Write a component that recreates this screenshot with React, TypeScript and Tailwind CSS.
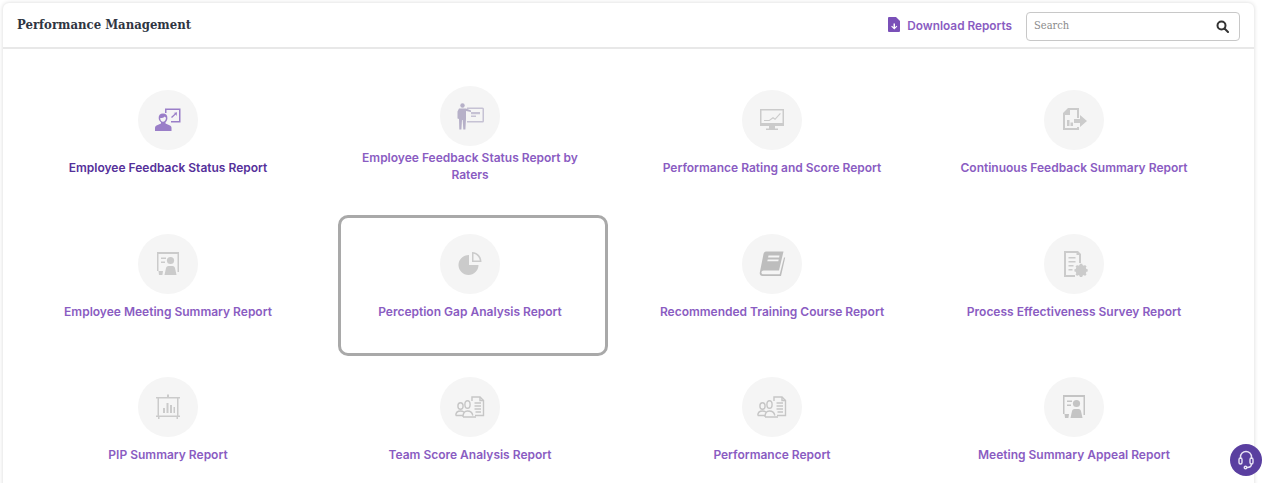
import React from "react";

const Ic = ({ children, c = "#cbcbcb" }: { children: React.ReactNode; c?: string }) => (
  <svg width="30" height="30" viewBox="0 0 30 30" fill={c} stroke="none" style={{ color: c }}>
    {children}
  </svg>
);

const Presenter = () => (
  <Ic c="#9a7ec8">
    <path d="M12 3.500h15.500v14H18v-1.600h8V5H13.500v3H12z" />
    <path d="M18 12l4-3.500-1.500-.6 3.500-.6-.4 3.600-.9-1.400-3.700 3.400z" />
    <path d="M10 8.500c3 0 4.600 2 4.400 4.800-.1 1.600-.8 3-1.900 3.900v1.200l4.500 2.200c1 .5 1.500 1.300 1.500 2.400v3H2v-3c0-1.100.5-1.900 1.500-2.400L8 18.400v-1.200c-1.300-.9-2.200-2.300-2.300-3.900C5.500 10.500 7 8.500 10 8.500z" />
    <path d="M7.200 13c1.500.1 3.600-.3 4.600-1.500.4.700.9 1.100 1.200 1.300 0 2.200-1.300 4-3 4s-2.800-1.800-2.800-3.800z" fill="#f5f5f5" />
  </Ic>
);
const Pointer = () => (
  <Ic c="#b6b0c8">
    <circle cx="7.500" cy="4.500" r="2.200" />
    <path d="M4 7.500h7l5 2v1.500l-5-1v8l-.6 10.500H8.300L7.700 19H7l-.6 9.500H4.300L4 18l-1.500-.5v-7z" />
    <path fillRule="evenodd" d="M12 6.500h15.500q1.500 0 1.500 1.500v12q0 1.500-1.500 1.500H12V20h15.500V8H12z" opacity=".75" />
    <path d="M16 11h9v2.200h-9zM16 14.500h5v1.500h-5z" opacity=".75" />
  </Ic>
);
const Monitor = () => (
  <Ic>
    <path fillRule="evenodd" d="M3 4h24v17H3zM4.500 5.500v12.500h21V5.500z" />
    <path d="M12 21h6v2.500h3V25H9v-1.500h3z" />
    <path d="M7 15h5l4-3 2 1.500 5-5.500.8.700-5.700 6.300-2.100-1.600-3.600 2.600H7z" />
  </Ic>
);
const DocArrow = () => (
  <Ic>
    <path d="M9 3h11v10h-2V5h-7v5H6v13h12v-1h2v3H4V8z" />
    <path d="M8 15h2.500v6H8zM11.500 17.500H14V21h-2.500z" />
    <path d="M15 14h6v-4l7 6-7 6v-4h-6z" />
  </Ic>
);
const Meeting = ({ c }: { c?: string }) => (
  <Ic c={c}>
    <path fillRule="evenodd" d="M4 3h22v20h-1.500V5h-19v17H4z" />
    <path d="M8 8.500h5V10H8zM8 12.500h4V14H8z" />
    <circle cx="17.500" cy="11.500" r="3.600" />
    <path d="M11.500 26l1.500-7c.3-1.200 1.300-2 2.500-2h4c1.200 0 2.200.8 2.500 2l1.500 7z" />
    <path d="M5.500 22H10l-.6 4H6z" />
  </Ic>
);
const Pie = () => (
  <Ic>
    <path d="M14 6v10h9.500c0 5.500-4.500 10-10 10s-10-4.500-10-10S8 6 14 6z" />
    <path fillRule="evenodd" d="M17 3c5 0 9.500 4 9.500 10H17zM18.500 4.700v6.800h6.300c-.6-3.500-3-6.100-6.300-6.800z" />
  </Ic>
);
const Book = () => (
  <Ic c="#bdbdbd">
    <path d="M9 2.500h17.500L22 21.500H6.500c-1.400 0-2.100 1-2.100 2s.8 1.800 2 1.800h16.300L27 8.500h1.200L24 27H5.500C3.500 27 2.400 25.500 2.800 23.500L6.500 5C6.800 3.500 7.800 2.500 9 2.500z" />
    <path d="M11.500 6.500h11l-.4 2H11.100zM10.700 10.500h11l-.4 1.800h-11z" fill="#f5f5f5" />
  </Ic>
);
const DocGear = () => (
  <Ic>
    <path fillRule="evenodd" d="M5 2h14l3 3v9h-2V6h-2.500V4H7v22h9v2H5z" />
    <path d="M9.500 8h7v1.500h-7zM9.500 12h7v1.500h-7zM9.500 16h5v1.500h-5zM9.500 20h4v1.500h-4z" />
    <path
      fillRule="evenodd"
      d="M21 14h3l.4 1.800 1.700.7 1.500-1 2 2-1 1.500.7 1.700 1.700.3v3l-1.700.4-.7 1.700 1 1.500-2 2-1.500-1-1.700.7-.4 1.700h-3l-.4-1.700-1.700-.7-1.500 1-2-2 1-1.500-.7-1.700-1.700-.4v-3l1.700-.3.7-1.700-1-1.500 2-2 1.500 1 1.700-.7z"
      transform="translate(4.500 3.800) scale(.78)"
    />
  </Ic>
);
const Board = () => (
  <Ic>
    <path fillRule="evenodd" d="M14 2.500h2V5h11v1.500h-1.500v17H27V25h-2v2h-1.500v-2h-17v2H5v-2H3v-1.500h1.500v-17H3V5h11zM6 6.500v17h18v-17z" />
    <path d="M10 16h2v5h-2zM13.500 11h2v10h-2zM17 13h2v8h-2zM20.500 15h1.500v6h-1.500z" />
  </Ic>
);
const Team = () => (
  <Ic>
    <g fill="none" stroke="#c6c6c6" strokeWidth="1.400">
      <path d="M17 9V5h8l3.500 3.500v15H20" />
      <path d="M25 5v3.500h3.500M19.500 11h6.500M19.500 14h6.500M19.500 17h6.500M20.500 20h5.500" />
      <ellipse cx="5.500" cy="14" rx="2.600" ry="3.300" />
      <ellipse cx="12.500" cy="12.500" rx="2.600" ry="3.800" />
      <path d="M.8 23.500c0-3 1.800-4.500 4.700-4.500 1.500 0 2.500.4 3.500 1M8 25c0-3.500 1.700-6 4.500-6s4.800 1.800 5.300 4.500" />
      <path d="M.8 23.500H8M8 25h13" />
    </g>
  </Ic>
);

const Item = ({
  label,
  icon,
  tight,
  dark,
  active,
}: {
  label: string;
  icon: React.ReactNode;
  tight?: boolean;
  dark?: boolean;
  active?: boolean;
}) => (
  <div
    className={`h-[141px] pr-[6px] flex flex-col items-center rounded-[10px] border-[3px] ${
      active ? "border-[#a9a9a9]" : "border-transparent"
    } ${tight ? "pt-[12px]" : "pt-[16px]"}`}
  >
    <div className="w-[60px] h-[60px] shrink-0 rounded-full bg-[#f5f5f5] flex items-center justify-center">{icon}</div>
    <div
      className={`px-[6px] text-center text-[12px] leading-[17px] font-semibold font-['Inter','Liberation_Sans',sans-serif] ${
        tight ? "mt-[3px]" : "mt-[9px]"
      } ${dark ? "text-[#55309a]" : "text-[#8a5cc2]"}`}
    >
      {label}
    </div>
  </div>
);

export default function App() {
  return (
    <div className="relative w-[1275px] h-[483px] overflow-hidden bg-white">
      <div className="ml-[3px] mt-[3px] w-[1251px] h-[520px] rounded-t-[6px] bg-white shadow-[0_0_4px_rgba(0,0,0,0.16)]">
        <div className="h-[46px] flex items-center justify-between pl-[14px] pr-[14px] border-b-2 border-[#e8e8e8]">
          <h1 className="text-[13px] font-bold text-[#2f3542] font-['DejaVu_Serif_Condensed','DejaVu_Serif',serif]">
            Performance Management
          </h1>
          <div className="flex items-center mt-[3px]">
            <div className="flex items-center text-[#8a5cc2] text-[11.800px] font-semibold font-['Inter',sans-serif] mr-[14px]">
              <svg width="13" height="15" viewBox="0 0 13 15" className="mr-[6px] -mt-[4px]" fill="#7a50b8">
                <path fillRule="evenodd" d="M1 0h7l4 4v10a1 1 0 0 1-1 1H1a1 1 0 0 1-1-1V1a1 1 0 0 1 1-1zM5.500 6.500v3.700L4 8.800l-.8.8L6.300 12.500l3-2.900-.8-.8-1.500 1.400V6.500z" />
              </svg>
              Download Reports
            </div>
            <div className="w-[214px] h-[29px] rounded-[4px] border border-[#c8c8c8] flex items-center justify-between pl-[7px] pr-[10px]">
              <span className="text-[11px] text-[#8b8b8b] font-['DejaVu_Serif_Condensed','DejaVu_Serif',serif]">Search</span>
              <svg width="13" height="13" viewBox="0 0 13 13" fill="none" stroke="#333" strokeWidth="2">
                <circle cx="5.500" cy="5.500" r="4" />
                <path d="M8.500 8.500L12 12" strokeLinecap="round" />
              </svg>
            </div>
          </div>
        </div>
        <div className="grid grid-cols-[270px_270px_270px_270px] gap-x-[32px] gap-y-[2.500px] pl-[33px] pt-[22px]">
          <Item dark label="Employee Feedback Status Report" icon={<Presenter />} />
          <Item tight label="Employee Feedback Status Report by Raters" icon={<Pointer />} />
          <Item label="Performance Rating and Score Report" icon={<Monitor />} />
          <Item label="Continuous Feedback Summary Report" icon={<DocArrow />} />
          <Item label="Employee Meeting Summary Report" icon={<Meeting />} />
          <Item active label="Perception Gap Analysis Report" icon={<Pie />} />
          <Item label="Recommended Training Course Report" icon={<Book />} />
          <Item label="Process Effectiveness Survey Report" icon={<DocGear />} />
          <Item label="PIP Summary Report" icon={<Board />} />
          <Item label="Team Score Analysis Report" icon={<Team />} />
          <Item label="Performance Report" icon={<Team />} />
          <Item label="Meeting Summary Appeal Report" icon={<Meeting c="#c4c4c4" />} />
        </div>
      </div>
      <div className="absolute left-[1230px] top-[444px] w-[32px] h-[32px] rounded-full bg-[#5a3fa0] flex items-center justify-center">
        <svg width="18" height="20" viewBox="0 0 18 20" fill="none" stroke="#e9e4f5" strokeWidth="1.400">
          <path d="M3.500 9V7a5.500 5.500 0 0 1 11 0v2" />
          <rect x="2" y="8" width="3" height="6" rx="1.500" />
          <rect x="13" y="8" width="3" height="6" rx="1.500" />
          <path d="M14.500 14c0 2.500-2 3.500-4.500 3.500" />
          <circle cx="8.500" cy="17.500" r="1.300" />
        </svg>
      </div>
    </div>
  );
}
